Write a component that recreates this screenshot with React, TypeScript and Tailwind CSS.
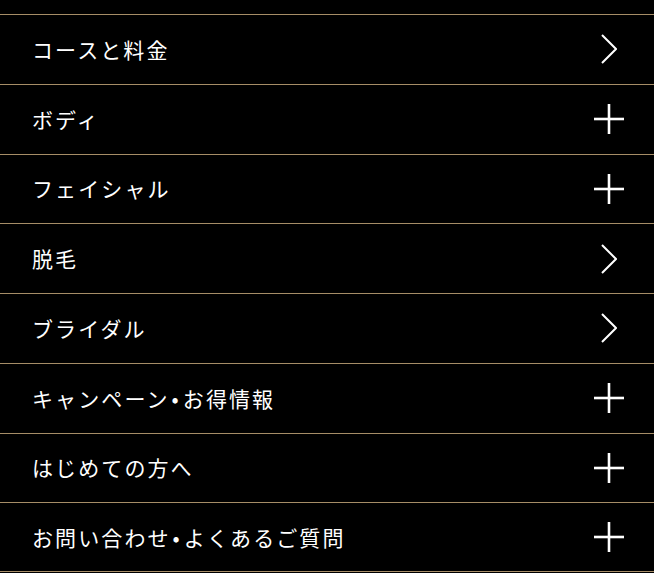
const items: { label: string; kind: "link" | "open" }[] = [
  { label: "コースと料金", kind: "link" },
  { label: "ボディ", kind: "open" },
  { label: "フェイシャル", kind: "open" },
  { label: "脱毛", kind: "link" },
  { label: "ブライダル", kind: "link" },
  { label: "キャンペーン•お得情報", kind: "open" },
  { label: "はじめての方へ", kind: "open" },
  { label: "お問い合わせ•よくあるご質問", kind: "open" },
];

function Chevron() {
  return (
    <svg width="16" height="30" viewBox="0 0 16 30" fill="none">
      <polyline points="1,1 15,15 1,29" stroke="white" strokeWidth="2" />
    </svg>
  );
}

function Plus() {
  return (
    <svg width="30" height="30" viewBox="0 0 30 30" fill="none">
      <line x1="0" y1="15" x2="30" y2="15" stroke="white" strokeWidth="2.6" />
      <line x1="15" y1="0" x2="15" y2="30" stroke="white" strokeWidth="2.6" />
    </svg>
  );
}

function Label({ text }: { text: string }) {
  const parts = text.split("•");
  return (
    <span className="text-[21px] leading-none tracking-[0.1em] text-white">
      {parts.map((p, i) => (
        <span key={i}>
          {i > 0 && <span className="px-[2px]">•</span>}
          {p}
        </span>
      ))}
    </span>
  );
}

export default function App() {
  return (
    <div className="min-h-screen bg-black pt-[14px] font-['Noto_Sans_CJK_JP','Noto_Sans',sans-serif]">
      <ul>
        {items.map((it, i) => (
          <li
            key={it.label}
            className={
              "flex h-[69.75px] items-center justify-between border-t border-[#a68d67] pl-[32px] pr-[30px]" +
              (i === items.length - 1 ? " border-b" : "")
            }
          >
            <Label text={it.label} />
            <span className="flex w-[30px] items-center justify-center">
              {it.kind === "link" ? <Chevron /> : <Plus />}
            </span>
          </li>
        ))}
      </ul>
    </div>
  );
}
